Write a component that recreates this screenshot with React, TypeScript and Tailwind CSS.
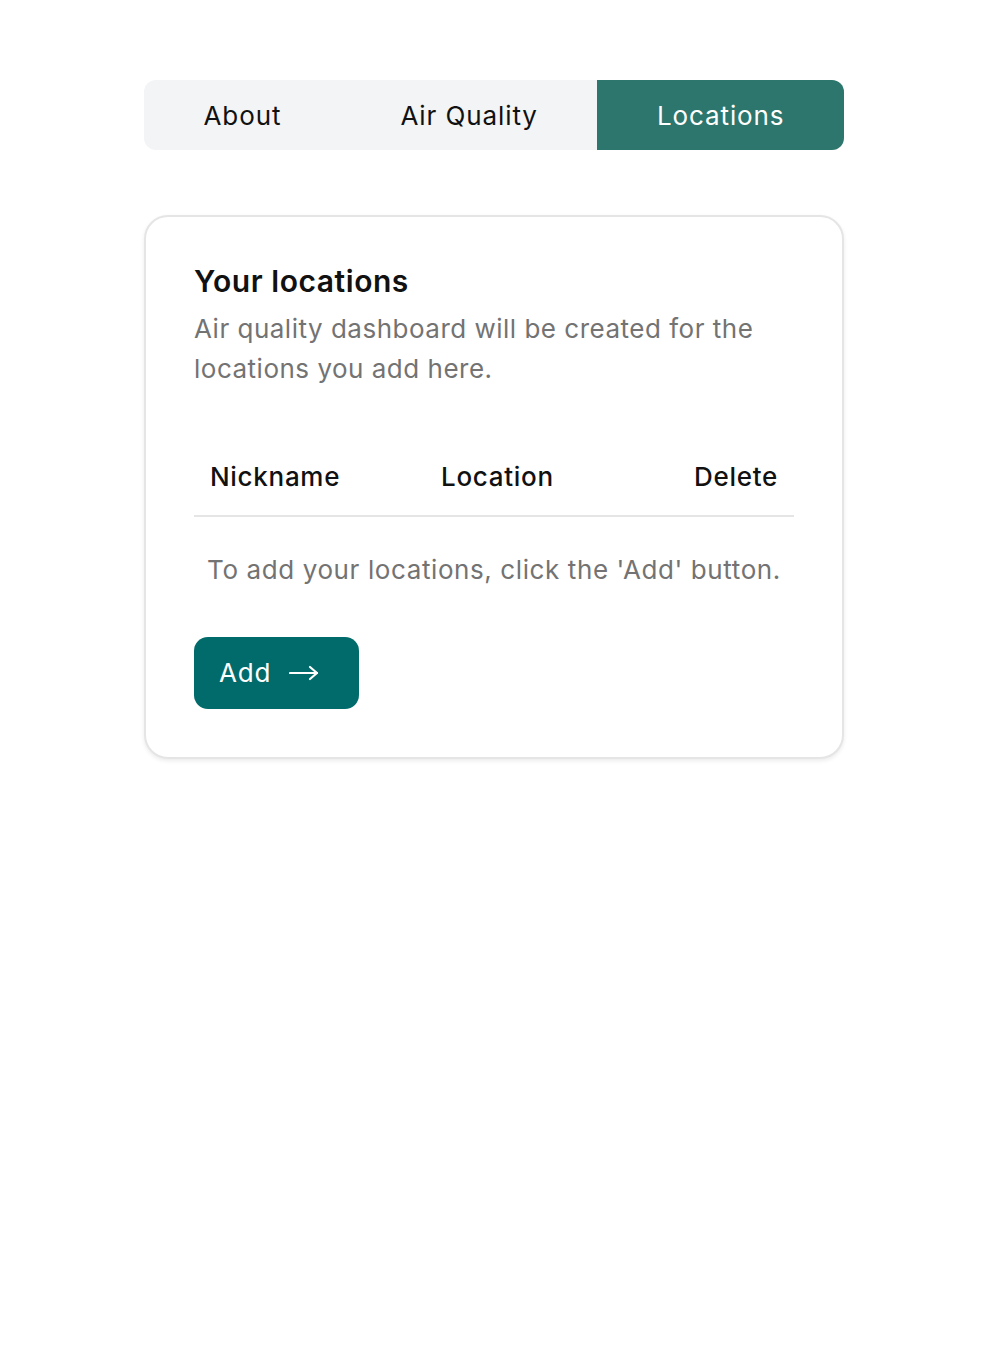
import React from "react";

export default function App() {
  return (
    <div className="min-h-[1364px] bg-white pt-20 font-['Inter',_'Noto_Sans',_sans-serif]">
      <div className="mx-auto w-[700px]">
        <div className="flex h-[70px] overflow-hidden rounded-xl bg-[#f3f4f6] pt-[2px] text-[26px] leading-none tracking-[0.9px]">
          <button className="flex flex-auto items-center justify-center text-[#111111]">About</button>
          <button className="flex flex-auto items-center justify-center text-[#111111]">Air Quality</button>
          <button className="-mt-[2px] flex flex-auto items-center justify-center bg-[#2c766d] pt-[2px] text-white">Locations</button>
        </div>

        <div className="mt-[65px] w-[700px] rounded-[24px] border-2 border-[#e5e5e5] bg-white px-12 pt-[46px] pb-12 shadow-[0_2px_4px_rgba(0,0,0,0.08)]">
          <h2 className="text-[30px] font-semibold leading-[36px] tracking-[0.55px] text-[#111111]">Your locations</h2>
          <p className="mt-[10px] text-[26px] leading-[40px] tracking-[0.5px] text-[#737373]">
            Air quality dashboard will be created for the locations you add here.
          </p>

          <div className="mt-[48px] w-[600px]">
            <div className="flex border-b-2 border-[#e5e5e5] pt-5 pb-[18px] text-[26px] font-medium leading-[40px] tracking-[0.7px] text-[#111111]">
              <div className="w-[231px] px-4">Nickname</div>
              <div className="flex-1 px-4">Location</div>
              <div className="px-4 text-right">Delete</div>
            </div>
            <div className="pt-[33px] text-center text-[26px] leading-[40px] tracking-[0.6px] text-[#737373]">
              To add your locations, click the 'Add' button.
            </div>
          </div>

          <button className="mt-[47px] flex h-[72px] w-[165px] items-center gap-[18px] rounded-[14px] bg-[#016b6b] pl-[25px] text-[26px] leading-none tracking-[0.8px] text-white">
            <span>Add</span>
            <svg width="30" height="16" viewBox="0 0 30 16" fill="none" stroke="white" strokeWidth="2.2" strokeLinecap="round" strokeLinejoin="round">
              <path d="M1 8h27" />
              <path d="M21 2l7 6-7 6" />
            </svg>
          </button>
        </div>
      </div>
    </div>
  );
}
